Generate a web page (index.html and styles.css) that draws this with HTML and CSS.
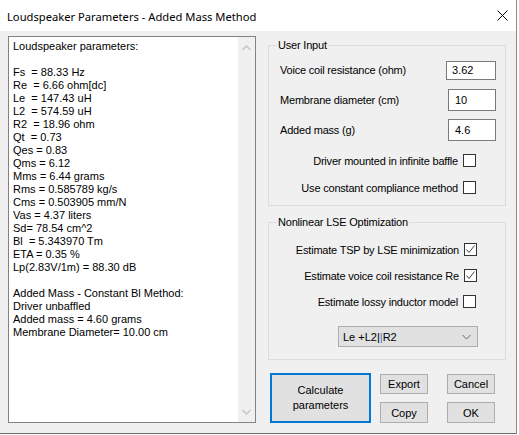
FILE: index.html
```html
<!DOCTYPE html>
<html>
<head>
    <meta charset="utf-8">
    <title>Loudspeaker Parameters - Added Mass Method</title>
    <link rel="stylesheet" href="styles.css">
</head>
<body>
    <div class="dialog">
        <div class="titlebar">
            <span class="title">Loudspeaker Parameters - Added Mass Method</span>
            <svg class="close" width="11" height="11" viewBox="0 0 11 11">
                <path d="M0.5 0.5 L10.5 10.5 M10.5 0.5 L0.5 10.5" stroke="#000" stroke-width="1" fill="none"/>
            </svg>
        </div>

        <div class="main">
            <!-- resultados -->
            <div class="output">
                <div class="output-text">Loudspeaker parameters:

Fs  = 88.33 Hz
Re  = 6.66 ohm[dc]
Le  = 147.43 uH
L2  = 574.59 uH
R2  = 18.96 ohm
Qt  = 0.73
Qes = 0.83
Qms = 6.12
Mms = 6.44 grams
Rms = 0.585789 kg/s
Cms = 0.503905 mm/N
Vas = 4.37 liters
Sd= 78.54 cm^2
Bl  = 5.343970 Tm
ETA = 0.35 %
Lp(2.83V/1m) = 88.30 dB

Added Mass - Constant Bl Method:
Driver unbaffled
Added mass = 4.60 grams
Membrane Diameter= 10.00 cm</div>
                <div class="scrollbar">
                    <svg width="9" height="6" viewBox="0 0 9 6"><path d="M0.5 5 L4.5 1 L8.5 5" stroke="#c4c4c4" stroke-width="1.3" fill="none"/></svg>
                    <svg width="9" height="6" viewBox="0 0 9 6"><path d="M0.5 1 L4.5 5 L8.5 1" stroke="#c4c4c4" stroke-width="1.3" fill="none"/></svg>
                </div>
            </div>

            <div class="side">
                <div class="group user-input">
                    <span class="group-title">User Input</span>
                    <div class="field row-1">
                        <span>Voice coil resistance (ohm)</span>
                        <input class="edit wide" type="text" value="3.62">
                    </div>
                    <div class="field row-2">
                        <span>Membrane diameter (cm)</span>
                        <input class="edit" type="text" value="10">
                    </div>
                    <div class="field row-3">
                        <span>Added mass (g)</span>
                        <input class="edit" type="text" value="4.6">
                    </div>
                    <div class="check-row ck-1">
                        <span>Driver mounted in infinite baffle</span>
                        <span class="check"></span>
                    </div>
                    <div class="check-row ck-2">
                        <span>Use constant compliance method</span>
                        <span class="check"></span>
                    </div>
                </div>

                <div class="group lse">
                    <span class="group-title">Nonlinear LSE Optimization</span>
                    <div class="check-row lse-1">
                        <span>Estimate TSP by LSE minimization</span>
                        <span class="check"><svg width="11" height="11" viewBox="0 0 11 11"><path d="M1.5 5.5 L4 8.5 L9.5 1.5" stroke="#444" stroke-width="1" fill="none"/></svg></span>
                    </div>
                    <div class="check-row lse-2">
                        <span>Estimate voice coil resistance Re</span>
                        <span class="check"><svg width="11" height="11" viewBox="0 0 11 11"><path d="M1.5 5.5 L4 8.5 L9.5 1.5" stroke="#444" stroke-width="1" fill="none"/></svg></span>
                    </div>
                    <div class="check-row lse-3">
                        <span>Estimate lossy inductor model</span>
                        <span class="check"></span>
                    </div>
                    <div class="combo-row">
                        <div class="combo">
                            <span>Le +L2|<span class="caret">|</span>R2</span>
                            <svg width="9" height="6" viewBox="0 0 9 6"><path d="M0.5 1 L4.5 5 L8.5 1" stroke="#666" stroke-width="1" fill="none"/></svg>
                        </div>
                    </div>
                </div>

                <div class="buttons">
                    <button class="btn calc">Calculate<br>parameters</button>
                    <div class="small-btns">
                        <button class="btn">Export</button>
                        <button class="btn">Cancel</button>
                        <button class="btn tall">Copy</button>
                        <button class="btn tall">OK</button>
                    </div>
                </div>
            </div>
        </div>
    </div>
</body>
</html>
```

FILE: styles.css
```css
body {
    margin: 0;
    background: #fff;
    font-family: "Liberation Sans", Arial, sans-serif;
    font-size: 11px;
    color: #000;
}

.dialog {
    width: 517px;
    height: 434px;
    box-sizing: border-box;
    background: #f0f0f0;
    border-right: 1px solid #8a8a8a;
    border-bottom: 1px solid #6e6e6e;
}

.titlebar {
    height: 31px;
    background: #fff;
    display: flex;
    align-items: center;
    justify-content: space-between;
    padding: 0 8px 0 7px;
}

.title {
    font-family: "Noto Sans", "Open Sans", sans-serif;
    font-size: 11.2px;
    margin-top: 1px;
}

.main {
    display: flex;
    padding: 5px 0 0 8px;
}

/* caja de resultados */
.output {
    width: 248px;
    height: 387px;
    box-sizing: border-box;
    border: 1px solid #828282;
    background: #fff;
    display: flex;
}

.output-text {
    flex: 1;
    white-space: pre;
    line-height: 13px;
    padding: 3px 0 0 4px;
    overflow: hidden;
}

.scrollbar {
    width: 17px;
    background: #f0f0f0;
    display: flex;
    flex-direction: column;
    justify-content: space-between;
    align-items: center;
    padding: 8px 0 7px;
    box-sizing: border-box;
}

.side {
    width: 238px;
    margin: 9px 0 0 12px;
    letter-spacing: -0.2px;
}

.group {
    position: relative;
    border: 1px solid #dcdcdc;
    display: flex;
    flex-direction: column;
}

.group-title {
    position: absolute;
    top: -8px;
    left: 8px;
    padding: 0 1px;
    line-height: 14px;
    background: #f0f0f0;
}

.user-input {
    padding: 14px 9px 11px 11px;
}

.field {
    display: flex;
    align-items: center;
    justify-content: space-between;
}

.row-1 { height: 20px; }
.row-2 { height: 22px; margin-top: 9px; }
.row-3 { height: 22px; margin-top: 8px; }

.edit {
    width: 48px;
    height: 22px;
    box-sizing: border-box;
    border: 1px solid #7a7a7a;
    background: #fff;
    font: inherit;
    letter-spacing: 0;
    padding: 0 0 0 6px;
    margin: 0;
    outline: none;
}

.edit.wide {
    width: 50px;
    height: 19px;
    padding-left: 5px;
}

.check-row {
    display: flex;
    align-items: center;
    justify-content: flex-end;
    gap: 5px;
    height: 13px;
    padding-right: 20px;
}

.ck-1 { margin-top: 13px; }
.ck-2 { margin-top: 14px; }

.check {
    width: 13px;
    height: 13px;
    box-sizing: border-box;
    border: 1px solid #333;
    background: #fff;
    display: flex;
    align-items: center;
    justify-content: center;
}

.lse {
    margin-top: 16px;
    padding: 20px 9px 12px 11px;
}

.lse-1 { padding-right: 19px; }
.lse-2 { margin-top: 13px; padding-right: 19px; }
.lse-3 { margin-top: 13px; }

.combo-row {
    display: flex;
    justify-content: flex-end;
    padding-right: 18px;
    margin-top: 18px;
}

.combo {
    width: 140px;
    height: 21px;
    box-sizing: border-box;
    border: 1px solid #adadad;
    background: #e1e1e1;
    display: flex;
    align-items: center;
    justify-content: space-between;
    padding: 0 6px 0 4px;
    letter-spacing: 0;
}

.caret {
    color: #3d7ac7;
}

.buttons {
    display: flex;
    margin: 13px 0 0 2px;
    letter-spacing: 0;
}

.btn {
    font: inherit;
    color: #000;
    background: #e1e1e1;
    border: 1px solid #adadad;
    padding: 0;
    margin: 0;
    width: 48px;
    height: 20px;
}

.btn.tall {
    height: 21px;
}

.btn.calc {
    width: 101px;
    height: 50px;
    border: 2px solid #0078d7;
    line-height: 15px;
}

.small-btns {
    display: grid;
    grid-template-columns: 48px 48px;
    column-gap: 19px;
    row-gap: 8px;
    margin: 1px 0 0 9px;
    align-content: start;
}
```
